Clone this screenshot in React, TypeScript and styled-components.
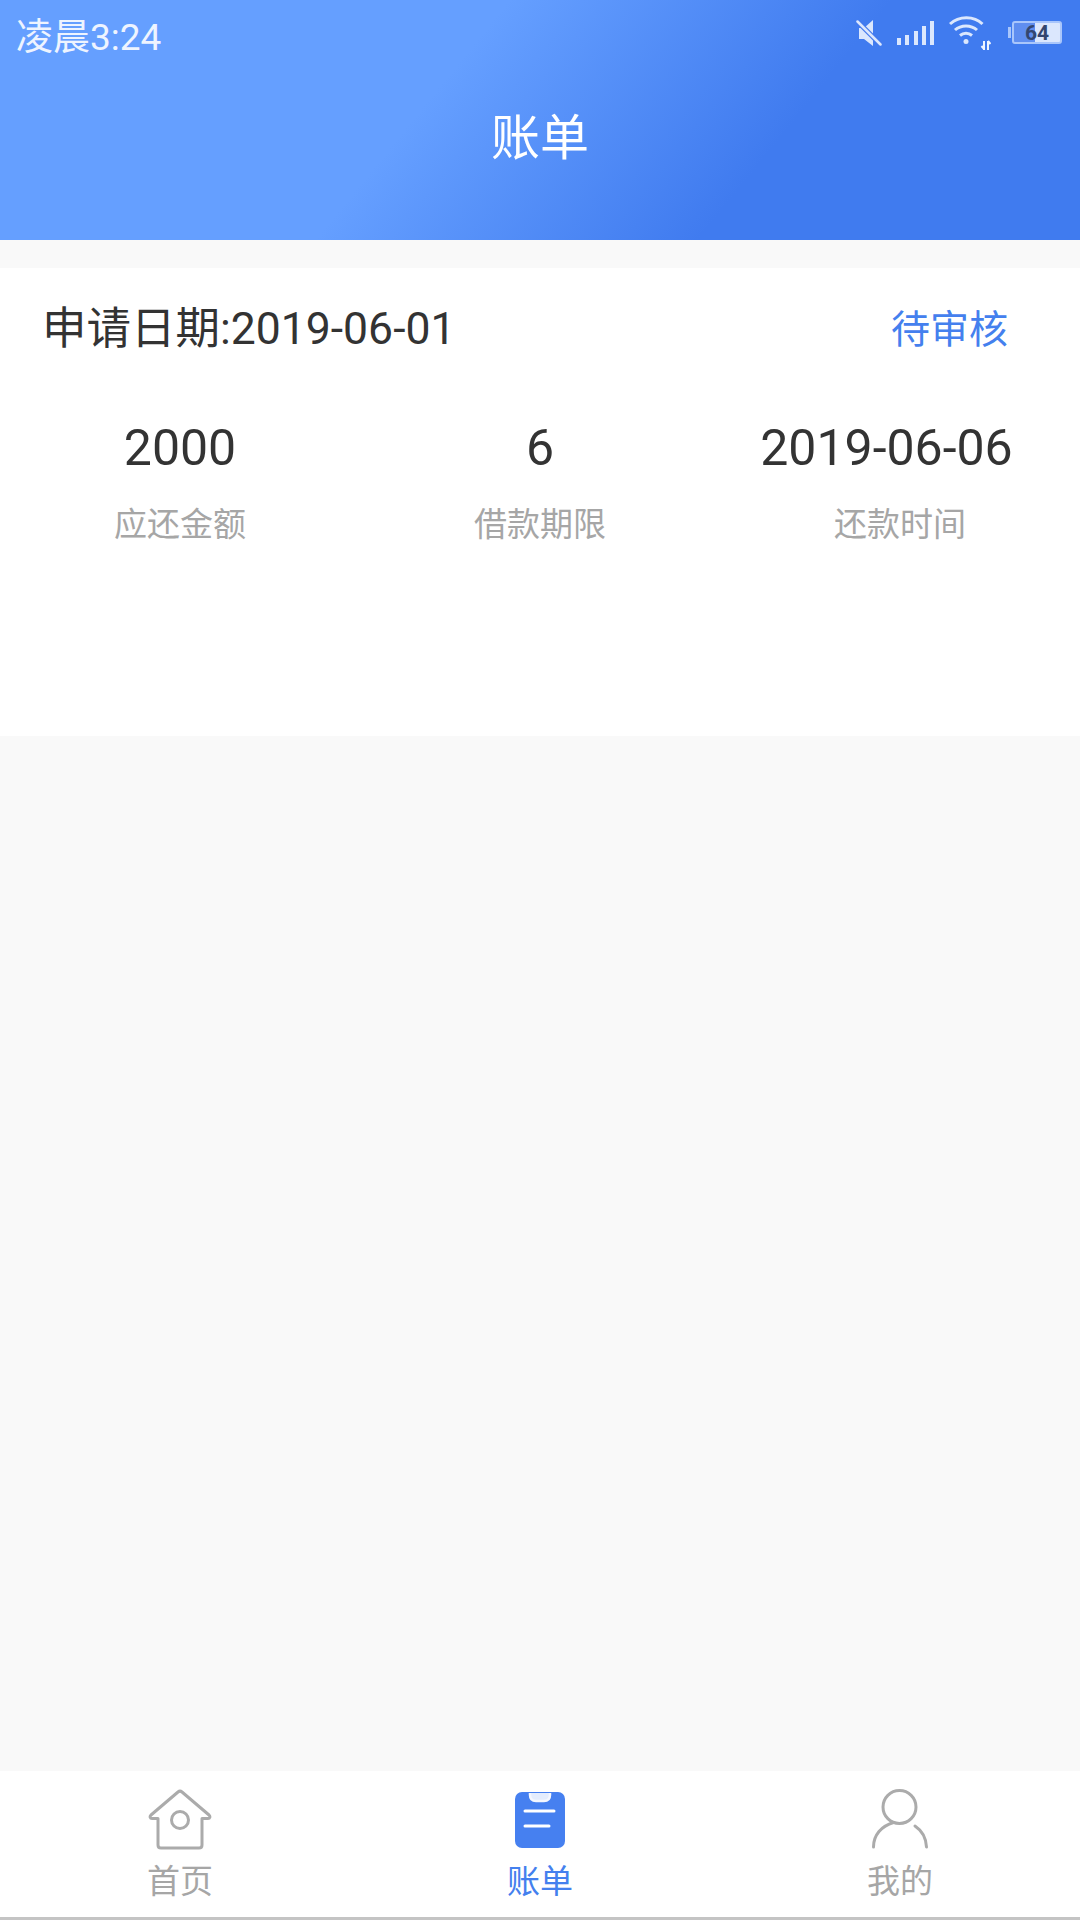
import React from "react";
import styled, { createGlobalStyle } from "styled-components";

const FONT = `Roboto, "Noto Sans CJK SC", sans-serif`;

const GlobalStyle = createGlobalStyle`
  html, body {
    margin: 0;
    padding: 0;
    background: #f9f9f9;
    font-family: ${FONT};
  }
`;

const stats = [
  { value: "2000", label: "应还金额" },
  { value: "6", label: "借款期限" },
  { value: "2019-06-06", label: "还款时间" },
];

const MuteIcon = () => (
  <svg width="26" height="26" viewBox="0 0 26 26">
    <path d="M3 8h5l9-8v26l-9-7H3z" fill="#dbe7fd" />
    <path d="M1 1l24 24" stroke="#4379ee" strokeWidth="5" />
    <path d="M1.500 1.500l23 23" stroke="#dbe7fd" strokeWidth="2.500" strokeLinecap="round" />
  </svg>
);

const SignalIcon = () => (
  <svg width="37" height="24" viewBox="0 0 37 24">
    <rect x="0" y="17" width="4" height="7" fill="#dbe7fd" />
    <rect x="8" y="14" width="4" height="10" fill="#dbe7fd" />
    <rect x="17" y="10" width="4" height="14" fill="#dbe7fd" />
    <rect x="25" y="5" width="4" height="19" fill="#dbe7fd" />
    <rect x="33" y="0" width="4" height="24" fill="#dbe7fd" />
  </svg>
);

const WifiIcon = () => (
  <svg width="42" height="34" viewBox="0 0 42 34" fill="none">
    <path d="M1 8c9-8.500 24-8.500 32.500 0" stroke="#dbe7fd" strokeWidth="3" />
    <path d="M6 14c6-5.500 16-5.500 22 0" stroke="#dbe7fd" strokeWidth="3" />
    <path d="M11 19.500c3.500-3 8.500-3 12 0" stroke="#dbe7fd" strokeWidth="3" />
    <circle cx="17" cy="25.500" r="2.500" fill="#dbe7fd" />
    <path d="M35 25v9M32.500 30l2.500 3M39 25v9M41.500 28l-2.500-3" stroke="#eef4ff" strokeWidth="2" />
  </svg>
);

const HomeIcon = () => (
  <svg width="64" height="62" viewBox="0 0 64 62" fill="none">
    <path
      d="M30 3c1.200-1 2.800-1 4 0l27 23c1.500 1.500 1 3.500-1 3.500h-6V56c0 2-1 3-3 3H13c-2 0-3-1-3-3V29.500H4c-2 0-2.500-2-1-3.500z"
      stroke="#ababab"
      strokeWidth="3"
      strokeLinejoin="round"
    />
    <circle cx="32" cy="31" r="8.500" stroke="#ababab" strokeWidth="3" />
  </svg>
);

const BillIcon = () => (
  <svg width="50" height="56" viewBox="0 0 50 56">
    <rect width="50" height="56" rx="7" fill="#4680f0" />
    <path
      d="M15 1v2c0 3.500 2 6 6 6h8c4 0 6-2.500 6-6V1"
      fill="#e3ecfd"
      stroke="#f4f7fe"
      strokeWidth="2.500"
    />
    <path d="M10 19h29M10 34h24" stroke="#fff" strokeWidth="3" strokeLinecap="round" fill="none" />
  </svg>
);

const MineIcon = () => (
  <svg width="56" height="60" viewBox="0 0 56 60" fill="none">
    <circle cx="27.500" cy="18" r="16.500" stroke="#ababab" strokeWidth="3" />
    <path
      d="M1.500 58c0-12 8-21 20-24.500M43 37c6 4 11 11 11.500 21"
      stroke="#ababab"
      strokeWidth="3"
      strokeLinecap="round"
    />
  </svg>
);

const App = () => {
  return (
    <Page>
      <GlobalStyle />
      <Header>
        <StatusBar>
          <StatusTime>凌晨3:24</StatusTime>
          <StatusIcons>
            <MuteIcon />
            <SignalIcon />
            <WifiIcon />
            <Battery>
              <BatteryLevel>64</BatteryLevel>
            </Battery>
          </StatusIcons>
        </StatusBar>
        <HeaderTitle>账单</HeaderTitle>
      </Header>
      <Main>
        <BillCard>
          <CardTop>
            <ApplyDate>申请日期:2019-06-01</ApplyDate>
            <BillStatus>待审核</BillStatus>
          </CardTop>
          <StatRow>
            {stats.map((s) => (
              <Stat key={s.label}>
                <StatValue>{s.value}</StatValue>
                <StatLabel>{s.label}</StatLabel>
              </Stat>
            ))}
          </StatRow>
        </BillCard>
      </Main>
      <TabBar>
        <Tab>
          <TabIcon>
            <HomeIcon />
          </TabIcon>
          <TabLabel>首页</TabLabel>
        </Tab>
        <Tab>
          <TabIcon $offset={21}>
            <BillIcon />
          </TabIcon>
          <TabLabel $active>账单</TabLabel>
        </Tab>
        <Tab>
          <TabIcon>
            <MineIcon />
          </TabIcon>
          <TabLabel>我的</TabLabel>
        </Tab>
      </TabBar>
    </Page>
  );
};

const Page = styled.div`
  display: flex;
  flex-direction: column;
  width: 1080px;
  height: 1920px;
  background: #f9f9f9;
  overflow: hidden;
`;

const Header = styled.header`
  display: flex;
  flex-direction: column;
  height: 240px;
  flex-shrink: 0;
  background: linear-gradient(129deg, #659fff 0%, #659fff 40%, #407bef 70%, #407bef 100%);
  color: #fff;
`;

const StatusBar = styled.div`
  display: flex;
  justify-content: space-between;
  align-items: center;
  height: 65px;
  padding: 0 18px 0 16px;
`;

const StatusTime = styled.span`
  margin-top: 10px;
  font-size: 37px;
  line-height: 44px;
  color: #eef4ff;
`;

const StatusIcons = styled.div`
  display: flex;
  align-items: center;
  gap: 15px;
`;

const Battery = styled.div`
  position: relative;
  box-sizing: border-box;
  display: flex;
  justify-content: center;
  align-items: center;
  width: 50px;
  height: 23px;
  margin-left: 6px;
  border: 2px solid #a9c6fb;
  border-radius: 3px;
  background: linear-gradient(90deg, #5f8ef0 0 46%, #dbe7fd 46%);

  &::before {
    content: "";
    position: absolute;
    left: -6px;
    top: 4px;
    width: 3px;
    height: 11px;
    background: #a9c6fb;
  }
`;

const BatteryLevel = styled.span`
  font-size: 21px;
  line-height: 20px;
  font-weight: 700;
  color: #33466f;
`;

const HeaderTitle = styled.h1`
  margin: 46px 0 0;
  font-size: 49px;
  font-weight: 400;
  line-height: 56px;
  text-align: center;
`;

const Main = styled.main`
  flex: 1;
  padding-top: 28px;
`;

const BillCard = styled.section`
  height: 468px;
  background: #fff;
`;

const CardTop = styled.div`
  display: flex;
  justify-content: space-between;
  align-items: center;
  height: 122px;
  padding: 0 72px 0 42px;
`;

const ApplyDate = styled.span`
  font-size: 44.5px;
  line-height: 56px;
  color: #333;
`;

const BillStatus = styled.span`
  margin-top: 2px;
  font-size: 39px;
  line-height: 56px;
  color: #4480ee;
`;

const StatRow = styled.div`
  display: grid;
  grid-template-columns: repeat(3, 360px);
  padding-top: 30px;
`;

const Stat = styled.div`
  display: flex;
  flex-direction: column;
  align-items: center;
`;

const StatValue = styled.span`
  font-size: 50px;
  line-height: 56px;
  color: #333;

  ${Stat}:last-child & {
    margin-right: 27px;
  }
`;

const StatLabel = styled.span`
  margin-top: 29px;
  font-size: 33px;
  line-height: 40px;
  color: #a6a6a6;
`;

const TabBar = styled.nav`
  display: grid;
  grid-template-columns: repeat(3, 360px);
  height: 146px;
  flex-shrink: 0;
  background: #fff;
  border-bottom: 3px solid #c4c4c4;
`;

const Tab = styled.div`
  display: flex;
  flex-direction: column;
  align-items: center;
`;

const TabIcon = styled.div<{ $offset?: number }>`
  box-sizing: border-box;
  display: flex;
  justify-content: center;
  align-items: flex-start;
  height: 88px;
  padding-top: ${({ $offset }) => $offset ?? 18}px;
`;

const TabLabel = styled.span<{ $active?: boolean }>`
  font-size: 33px;
  line-height: 46px;
  color: ${({ $active }) => ($active ? "#4480ee" : "#a6a6a6")};
`;

export default App;
